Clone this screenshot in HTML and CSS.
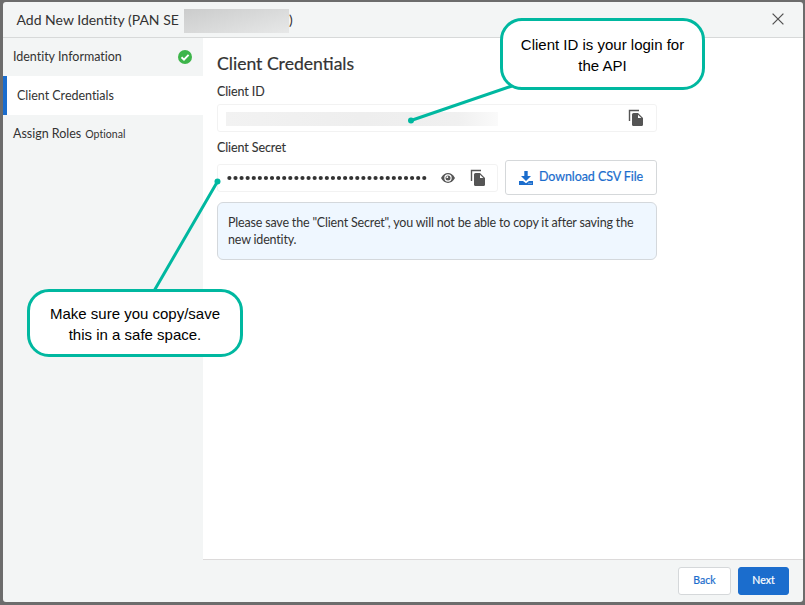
FILE: index.html
```html
<!DOCTYPE html>
<html lang="en">
<head>
<meta charset="utf-8">
<title>Add New Identity</title>
<link rel="stylesheet" href="styles.css">
</head>
<body>
<svg class="defs" width="0" height="0" aria-hidden="true">
  <symbol id="copy" viewBox="0 0 16 18">
    <path d="M1.500 12V1.500H11" fill="none" stroke="#555" stroke-width="1.400"/>
    <path d="M5.500 4H10L15 9V15.500Q15 17 13.500 17H5.500Q4 17 4 15.500V5.500Q4 4 5.500 4Z" fill="#555"/>
    <path d="M10 5.700V9H13.300Z" fill="#fff"/>
  </symbol>
</svg>
<div class="modal">
  <header class="header">
    <h1 class="title">Add New Identity (PAN SE</h1><span class="redacted-name"></span><span class="paren">)</span>
    <svg class="close" width="12" height="12" viewBox="0 0 12 12"><path d="M.6.6 11.400 11.400M11.400.6.6 11.400" stroke="#555" stroke-width="1.3"/></svg>
  </header>
  <div class="body">
    <nav class="sidebar">
      <div class="step"><span>Identity Information</span>
        <svg class="check" width="14" height="14" viewBox="0 0 14 14"><circle cx="7" cy="7" r="7" fill="#3db54a"/><path d="M3.500 7.200 6 9.600 10.600 4.900" fill="none" stroke="#fff" stroke-width="1.9"/></svg>
      </div>
      <div class="step active"><span>Client Credentials</span></div>
      <div class="step last"><span>Assign Roles</span><small>Optional</small></div>
    </nav>
    <div class="main">
      <main class="content">
        <h2 class="heading">Client Credentials</h2>
        <div class="label">Client ID</div>
        <div class="field field-id"><span class="redacted-id"></span><svg class="copy" width="16" height="18"><use href="#copy"/></svg></div>
        <div class="label label-secret">Client Secret</div>
        <div class="row">
          <div class="field field-secret">
            <svg class="dots" width="202" height="6"><path d="M2.400 3H202" stroke="#333" stroke-width="4.200" stroke-linecap="round" stroke-dasharray="0 6.090"/></svg>
            <svg class="eye" width="14" height="10" viewBox="0 0 14 10"><path d="M0 5Q2.800.1 7 .1T14 5Q11.200 9.900 7 9.900T0 5Z" fill="#555"/><circle cx="7" cy="5" r="3.700" fill="#fff"/><circle cx="7" cy="5" r="2.500" fill="#555"/><circle cx="6.300" cy="4.200" r=".9" fill="#fff"/></svg>
            <svg class="copy" width="16" height="18"><use href="#copy"/></svg>
          </div>
          <button class="button download"><svg width="14" height="14" viewBox="0 0 14 14"><path d="M5.300 0H8.700V5H12L7 10 2 5H5.300ZM0 10H4L7 12.200 10 10H14V14H0Z" fill="#1b6dcd"/><path d="M9.500 12.300H10.500M11.500 12.300H12.500" stroke="#fff" stroke-width=".8"/></svg><span>Download CSV File</span></button>
        </div>
        <div class="notice">Please save the "Client Secret", you will not be able to copy it after saving the<br>new identity.</div>
      </main>
      <footer class="footer"><button class="button back">Back</button><button class="button next">Next</button></footer>
    </div>
  </div>
</div>
<svg class="pointers" width="805" height="605"><g stroke="#00b8a0" stroke-width="3" fill="#00b8a0"><path d="M411 120.500 512 86M217.500 181.500 154 291"/><circle cx="411" cy="120.500" r="3" stroke="none"/><circle cx="217.500" cy="181.500" r="3" stroke="none"/></g></svg>
<div class="callout callout-id">Client ID is your login for<br>the API</div>
<div class="callout callout-secret">Make sure you copy/save<br>this in a safe space.</div>
</body>
</html>
```

FILE: styles.css
```css
* { box-sizing: border-box; }
body { margin: 0; padding: 2px 2px 3px 3px; width: 805px; height: 605px; overflow: hidden; background: #6c6c6c; font-family: Lato, sans-serif; font-size: 12.500px; color: #333; }
.defs { position: absolute; }
.modal { height: 600px; border-radius: 3px; background: #f3f5f5; overflow: hidden; display: flex; flex-direction: column; }
.header { height: 36px; flex: none; display: flex; align-items: center; padding: 0 19px 0 13.500px; border-bottom: 1px solid #d7d9d9; }
.title { margin: 0; width: 167.500px; font-size: 14px; font-weight: 400; white-space: nowrap; }
.redacted-name { width: 105px; height: 24px; margin-top: 3px; background: linear-gradient(165deg, #cbcccc, #dadbdb 55%, #e7e8e8); }
.paren { font-size: 14px; }
.close { margin-left: auto; margin-top: -2px; }
.body { flex: 1; display: flex; min-height: 0; }
.sidebar { width: 200px; flex: none; }
.step { height: 38px; display: flex; align-items: center; padding: 0 11px 0 10px; letter-spacing: -0.020px; font-variant-ligatures: none; }
.step span { margin-top: -2px; }
.step .check { margin-left: auto; }
.step.active { height: 39px; background: #fff; border-left: 4px solid #1b6dcd; }
.step.active span { margin-top: 0; }
.step small { font-size: 10.500px; margin: 0 0 0 4px; letter-spacing: 0.050px; }
.main { flex: 1; display: flex; flex-direction: column; min-width: 0; }
.content { flex: 1; background: #fff; padding: 14px 0 0 14px; }
.heading { margin: 0; height: 24px; line-height: 24px; font-size: 17.600px; font-weight: 400; -webkit-text-stroke: 0.200px #333; }
.label { height: 16px; margin-top: 8px; line-height: 16px; letter-spacing: -0.100px; -webkit-text-stroke: 0.100px #333; }
.label-secret { margin-top: 8px; }
.field { height: 28px; border: 1px solid #f2f2f2; border-radius: 3px; display: flex; align-items: center; padding-left: 8px; }
.field-id { width: 440px; margin-top: 4px; padding-right: 12px; }
.redacted-id { width: 272px; height: 14px; margin-top: 1px; background: linear-gradient(90deg, #f2f2f2, #eee 50%, #f0f0f0 85%, #fafafa); }
.field-id .copy { margin-left: auto; }
.row { display: flex; align-items: center; margin-top: 4px; height: 35px; gap: 7px; }
.field-secret { width: 281px; padding-left: 9px; }
.dots { margin-top: 1px; }
.eye { margin-left: 12px; }
.field-secret .copy { margin-left: 15px; }
.button { font-family: inherit; background: #fff; border: 1px solid #d5d8da; border-radius: 3px; color: #1b6dcd; padding: 0 0 1px; display: flex; align-items: center; justify-content: center; -webkit-text-stroke: 0.200px currentColor; }
.download { width: 152px; height: 35px; font-size: 12.500px; letter-spacing: -0.080px; gap: 6px; white-space: nowrap; }
.download svg { margin-top: 2px; }
.download span { margin-top: -1px; }
.notice { width: 440px; height: 58px; margin-top: 7px; padding: 11px 10px; border: 1px solid #d4d8dc; border-radius: 6px; background: #eff7ff; line-height: 17px; white-space: nowrap; font-variant-ligatures: none; letter-spacing: -0.180px; }
.footer { height: 43px; flex: none; border-top: 1px solid #dcdada; display: flex; justify-content: flex-end; gap: 7px; padding: 7px 14px 0 0; }
.back, .next { height: 28px; font-size: 10.500px; padding-bottom: 2px; }
.back { width: 53px; }
.next { width: 51px; background: #1b6dcd; border-color: #1b6dcd; color: #fff; }
.pointers { position: absolute; left: 0; top: 0; }
.callout { position: absolute; border: 3px solid #00b8a0; background: #fff; border-radius: 22px; color: #000; font: 15px/21px "Liberation Sans", sans-serif; text-align: center; white-space: nowrap; }
.callout-id { left: 500px; top: 18px; width: 205px; height: 72px; padding-top: 13px; }
.callout-secret { left: 27px; top: 289px; width: 216px; height: 68px; padding-top: 11px; }
```
